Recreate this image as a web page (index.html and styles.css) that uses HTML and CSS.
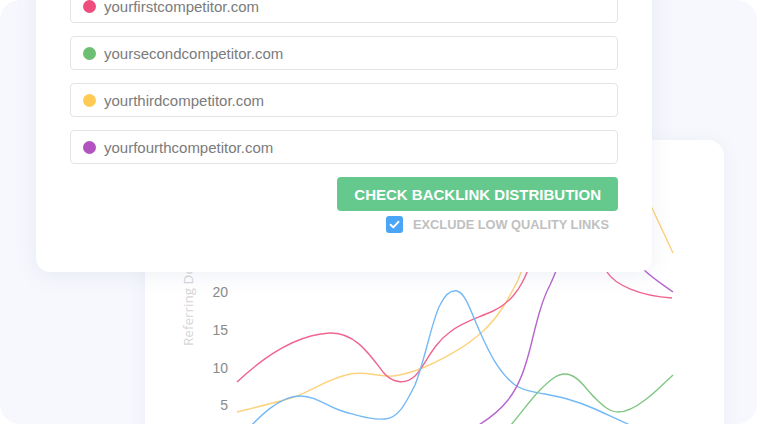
FILE: index.html
```html
<!DOCTYPE html>
<html>
<head>
<meta charset="utf-8">
<link rel="stylesheet" href="styles.css">
</head>
<body>
<div class="stage">
  <div class="form-card">
    <div class="fields">
      <div class="field"><span class="dot dot-red"></span><span class="field-text">yourfirstcompetitor.com</span></div>
      <div class="field"><span class="dot dot-green"></span><span class="field-text">yoursecondcompetitor.com</span></div>
      <div class="field"><span class="dot dot-yellow"></span><span class="field-text">yourthirdcompetitor.com</span></div>
      <div class="field"><span class="dot dot-purple"></span><span class="field-text">yourfourthcompetitor.com</span></div>
    </div>
    <div class="actions">
      <button class="check-btn">CHECK BACKLINK DISTRIBUTION</button>
      <label class="exclude">
        <span class="checkbox"><svg width="17" height="17" viewBox="0 0 17 17"><path d="M4.6 8.8 L7.3 11.4 L12.4 5.8" fill="none" stroke="#fff" stroke-width="2" stroke-linecap="round" stroke-linejoin="round"/></svg></span>
        <span class="exclude-text">EXCLUDE LOW QUALITY LINKS</span>
      </label>
    </div>
  </div>
  <div class="chart-card">
    <svg class="chart" width="579" height="284" viewBox="145 140 579 284">
      <text class="axis-title" transform="translate(193 346) rotate(-90)">Referring Domains</text>
      <text class="tick" x="228" y="296.5">20</text>
      <text class="tick" x="228" y="334.5">15</text>
      <text class="tick" x="228" y="372.5">10</text>
      <text class="tick" x="228" y="410">5</text>
      <path class="line line-yellow" d="M237,412 C260,406 280,402 297,396 C312,390 330,378 350,374 C365,371 380,377 393,376 C405,375 415,371 425,367 C445,358 465,348 482,332 C498,318 508,300 518,280 L530,250 C560,150 620,140 652,208 C660,225 667,240 673,253"/>
      <path class="line line-red" d="M237,382 C255,365 290,335 330,333 C355,332 370,355 383,372 C392,383 405,385 415,376 C425,366 432,345 450,332 C462,322 478,318 493,311 C510,303 520,290 528,270 L545,230 C560,190 590,230 607,272 C615,285 640,296 672,298"/>
      <path class="line line-blue" d="M240,438 C260,415 280,396 300,396 C318,396 328,408 345,412 C360,416 372,420 385,419 C398,418 405,405 415,385 C425,360 432,320 440,305 C446,293 452,290 457,291 C466,293 472,315 480,332 C488,350 498,372 515,385 C525,392 535,392 545,394 C560,397 575,400 595,409 C610,416 620,420 640,430"/>
      <path class="line line-purple" d="M470,430 C485,422 497,414 508,400 C520,385 526,365 531,345 C537,320 542,300 550,285 C556,272 560,260 565,250 C580,210 620,240 642,268 C652,278 662,284 673,292"/>
      <path class="line line-green" d="M505,432 C520,415 530,400 540,390 C550,380 557,374 565,374 C577,374 585,388 595,398 C603,406 610,412 618,412 C628,412 636,407 645,400 C655,393 663,384 673,375"/>
    </svg>
  </div>
</div>
</body>
</html>
```
FILE: styles.css
```css
html, body {
  margin: 0;
  padding: 0;
  background: #ffffff;
}

.stage {
  width: 757px;
  height: 424px;
  box-sizing: border-box;
  padding-left: 36px;
  background: #f7f8fd;
  border-radius: 20px;
  overflow: hidden;
}

.form-card {
  position: relative;
  z-index: 2;
  width: 616px;
  box-sizing: border-box;
  margin-top: -40px;
  padding: 29px 34px 39px;
  background: #ffffff;
  border-radius: 14px;
  box-shadow: 0 3px 22px rgba(90, 105, 170, 0.10);
}

.fields {
  display: flex;
  flex-direction: column;
  gap: 13px;
}

.field {
  display: flex;
  align-items: center;
  gap: 8px;
  height: 34px;
  box-sizing: border-box;
  padding-left: 12px;
  border: 1px solid #e3e3e3;
  border-radius: 4px;
  background: #ffffff;
}

.dot {
  width: 13px;
  height: 13px;
  border-radius: 50%;
  flex: none;
}

.dot-red { background: #ee4d7d; }
.dot-green { background: #6cbf72; }
.dot-yellow { background: #ffcb55; }
.dot-purple { background: #b154c0; }

.field-text {
  font-family: "Liberation Sans", Arial, sans-serif;
  font-size: 15px;
  color: #7b7b7b;
}

.actions {
  display: flex;
  flex-direction: column;
  align-items: flex-end;
  margin-top: 13px;
}

.check-btn {
  height: 34px;
  padding: 0 17px;
  border: none;
  border-radius: 4px;
  background: #65c98d;
  color: #ffffff;
  font-family: "Liberation Sans", Arial, sans-serif;
  font-weight: bold;
  font-size: 15px;
  cursor: pointer;
}

.exclude {
  display: flex;
  align-items: center;
  gap: 10px;
  margin-top: 5px;
  margin-right: 9px;
  height: 17px;
}

.checkbox {
  width: 17px;
  height: 17px;
  border-radius: 3px;
  background: #4ba5f7;
  display: block;
}

.checkbox svg {
  display: block;
}

.exclude-text {
  font-family: "Liberation Sans", Arial, sans-serif;
  font-weight: bold;
  font-size: 12.8px;
  color: #c0c0c0;
}

.chart-card {
  position: relative;
  z-index: 1;
  width: 579px;
  height: 320px;
  margin-top: -132px;
  margin-left: 109px;
  background: #ffffff;
  border-radius: 16px;
  box-shadow: 0 2px 18px rgba(90, 105, 170, 0.07);
}

.chart {
  display: block;
}

.axis-title {
  font-family: "Open Sans", sans-serif;
  font-size: 13.5px;
  fill: #d6d6d6;
}

.tick {
  font-family: "Liberation Sans", Arial, sans-serif;
  font-size: 14px;
  fill: #8a8a8a;
  text-anchor: end;
}

.line {
  fill: none;
  stroke-width: 1.4;
}

.line-red { stroke: #f0658f; }
.line-blue { stroke: #74b9f6; }
.line-yellow { stroke: #fdd27c; }
.line-purple { stroke: #b566cf; }
.line-green { stroke: #80c683; }
```
